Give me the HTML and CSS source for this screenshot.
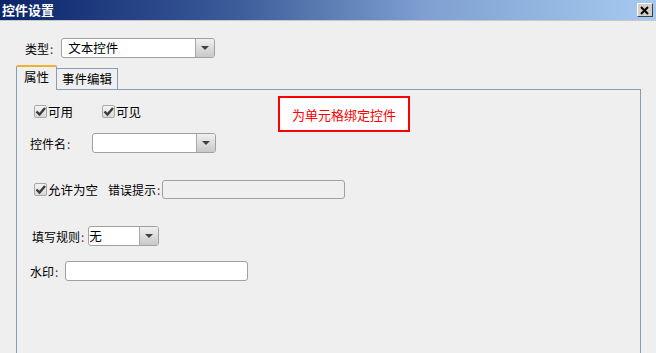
FILE: index.html
```html
<!DOCTYPE html>
<html lang="zh-CN">
<head>
    <meta charset="UTF-8">
    <title>控件设置</title>
    <link rel="stylesheet" href="styles.css">
</head>
<body>
    <div class="dialog">
        <div class="titlebar">
            <span class="title">控件设置</span>
            <span class="close">
                <svg width="10" height="9" viewBox="0 0 10 9"><path d="M1 1 L8 8 M8 1 L1 8" stroke="#000" stroke-width="2"/></svg>
            </span>
        </div>

        <div class="type-row">
            <span class="label">类型<span class="colon">:</span></span>
            <div class="select type-select">
                <span class="value">文本控件</span>
                <span class="arrow"><i></i></span>
            </div>
        </div>

        <div class="tabs">
            <div class="tab active">属性</div>
            <div class="tab">事件编辑</div>
        </div>

        <div class="panel">
            <div class="row row-check">
                <label class="check"><span class="box"><svg width="13" height="13" viewBox="0 0 13 13"><path d="M2.5 6.5 L5.5 9.5 L11 3" stroke="#3a3a3a" stroke-width="2.4" fill="none"/></svg></span>可用</label>
                <label class="check second"><span class="box"><svg width="13" height="13" viewBox="0 0 13 13"><path d="M2.5 6.5 L5.5 9.5 L11 3" stroke="#3a3a3a" stroke-width="2.4" fill="none"/></svg></span>可见</label>
            </div>

            <div class="row row-name">
                <span class="label">控件名<span class="colon">:</span></span>
                <div class="select name-select">
                    <span class="value"></span>
                    <span class="arrow"><i></i></span>
                </div>
            </div>

            <div class="row row-empty">
                <label class="check"><span class="box"><svg width="13" height="13" viewBox="0 0 13 13"><path d="M2.5 6.5 L5.5 9.5 L11 3" stroke="#3a3a3a" stroke-width="2.4" fill="none"/></svg></span>允许为空</label>
                <span class="label err-label">错误提示<span class="colon">:</span></span>
                <div class="input err-input disabled"></div>
            </div>

            <div class="row row-rule">
                <span class="label">填写规则<span class="colon">:</span></span>
                <div class="select rule-select">
                    <span class="value">无</span>
                    <span class="arrow"><i></i></span>
                </div>
            </div>

            <div class="row row-mark">
                <span class="label">水印<span class="colon">:</span></span>
                <div class="input mark-input"></div>
            </div>

            <div class="callout">为单元格绑定控件</div>
        </div>
    </div>
</body>
</html>
```

FILE: styles.css
```css
* {
    box-sizing: border-box;
}

body {
    margin: 0;
    width: 656px;
    height: 353px;
    overflow: hidden;
    background: #efefef;
    font-family: "Noto Sans CJK SC", "Noto Sans", sans-serif;
    font-size: 12px;
    color: #000;
}

.dialog {
    display: flex;
    flex-direction: column;
    height: 353px;
}

.titlebar {
    display: flex;
    align-items: center;
    justify-content: space-between;
    height: 21px;
    padding: 0 3px 0 2px;
    background: linear-gradient(to right, #0a246a 0%, #3a5a98 35%, #7fa0d0 65%, #a6caf0 100%);
    border-bottom: 1px solid #c8c8c8;
}

.title {
    color: #fff;
    font-weight: bold;
    font-size: 13px;
    line-height: 20px;
}

.close {
    display: flex;
    align-items: center;
    justify-content: center;
    width: 16px;
    height: 14px;
    background: #d4d0c8;
    border: 1px solid;
    border-color: #fff #404040 #404040 #fff;
}

.label {
    white-space: nowrap;
}

.colon {
    color: #7a1a3a;
    margin-left: 1px;
}

.type-row {
    display: flex;
    align-items: center;
    margin-top: 17px;
    padding-left: 25px;
    height: 20px;
}

.select {
    display: flex;
    height: 20px;
    background: #fff;
    border: 1px solid #a0a0a0;
    border-radius: 3px;
    overflow: hidden;
}

.select .value {
    flex: 1;
    padding-left: 6px;
    line-height: 18px;
    font-size: 12.5px;
}

.select .arrow {
    display: flex;
    align-items: center;
    justify-content: center;
    width: 19px;
    border-left: 1px solid #a8a8a8;
    background: linear-gradient(#f0f0f0, #c8c8c8);
}

.select .arrow i {
    width: 0;
    height: 0;
    border-left: 4px solid transparent;
    border-right: 4px solid transparent;
    border-top: 4px solid #404040;
}

.type-select {
    width: 154px;
    margin-left: 8px;
}

.tabs {
    display: flex;
    align-items: flex-end;
    margin-top: 7px;
    margin-left: 16px;
    height: 24px;
}

.tab {
    height: 21px;
    padding: 0 5px;
    line-height: 20px;
    border: 1px solid #8a9cb8;
    border-bottom: none;
    font-size: 12.5px;
    white-space: nowrap;
}

.tab.active {
    position: relative;
    z-index: 1;
    height: 25px;
    margin-bottom: -1px;
    width: 41px;
    padding: 0 0 0 7px;
    border-top: 2px solid #f0b030;
    border-radius: 2px 2px 0 0;
    background: #efefef;
    line-height: 20px;
}

.tab:not(.active) {
    border-left: none;
}

.panel {
    position: relative;
    flex: 1;
    margin-left: 16px;
    width: 625px;
    border: 1px solid #8a9cb8;
    border-bottom: none;
    padding-top: 13px;
    display: flex;
    flex-direction: column;
}

.row {
    display: flex;
    align-items: center;
}

.check {
    display: flex;
    align-items: center;
    white-space: nowrap;
    font-size: 12.5px;
}

.check .box {
    display: flex;
    width: 13px;
    height: 13px;
    margin-right: 1px;
    background: linear-gradient(#f4f4f4, #d8d8d8);
    border: 1px solid #a8a8a8;
    border-radius: 2px;
    overflow: hidden;
}

.check .box svg {
    margin: -1px;
}

.row-check {
    height: 16px;
    padding-left: 17px;
}

.check.second {
    margin-left: 29px;
}

.row-name {
    margin-top: 14px;
    padding-left: 13px;
}

.name-select {
    width: 124px;
    margin-left: 22px;
}

.row-empty {
    margin-top: 26px;
    padding-left: 17px;
    height: 20px;
}

.err-label {
    margin-left: 10px;
}

.input {
    height: 20px;
    background: #fff;
    border: 1px solid #a0a0a0;
    border-radius: 3px;
}

.input.disabled {
    background: #efefef;
}

.err-input {
    width: 183px;
    height: 19px;
    margin-left: 2px;
}

.row-rule {
    margin-top: 27px;
    padding-left: 15px;
}

.rule-select {
    width: 71px;
    margin-left: 4px;
}

.rule-select .value {
    padding-left: 0;
}

.row-mark {
    margin-top: 15px;
    padding-left: 13px;
}

.mark-input {
    width: 183px;
    margin-left: 7px;
}

.callout {
    position: absolute;
    left: 261px;
    top: 6px;
    width: 132px;
    height: 36px;
    border: 2px solid #f00;
    background: #fff;
    color: #f00;
    font-size: 13px;
    display: flex;
    align-items: center;
    justify-content: center;
}
```
